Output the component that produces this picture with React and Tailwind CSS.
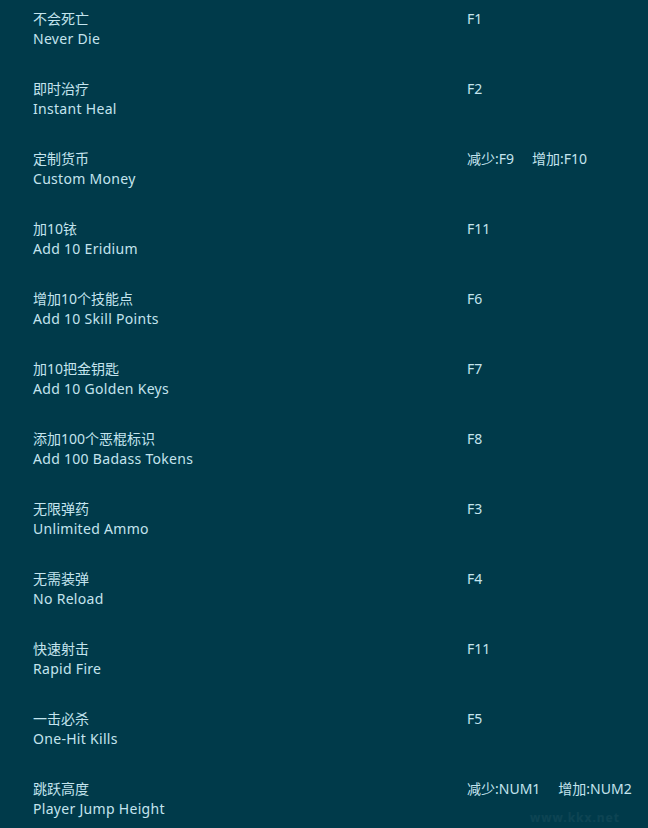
import React from 'react';

const rows = [
  { cn: '不会死亡', en: 'Never Die', keys: ['F1'] },
  { cn: '即时治疗', en: 'Instant Heal', keys: ['F2'] },
  { cn: '定制货币', en: 'Custom Money', keys: ['减少:F9', '增加:F10'] },
  { cn: '加10铱', en: 'Add 10 Eridium', keys: ['F11'] },
  { cn: '增加10个技能点', en: 'Add 10 Skill Points', keys: ['F6'] },
  { cn: '加10把金钥匙', en: 'Add 10 Golden Keys', keys: ['F7'] },
  { cn: '添加100个恶棍标识', en: 'Add 100 Badass Tokens', keys: ['F8'] },
  { cn: '无限弹药', en: 'Unlimited Ammo', keys: ['F3'] },
  { cn: '无需装弹', en: 'No Reload', keys: ['F4'] },
  { cn: '快速射击', en: 'Rapid Fire', keys: ['F11'] },
  { cn: '一击必杀', en: 'One-Hit Kills', keys: ['F5'] },
  { cn: '跳跃高度', en: 'Player Jump Height', keys: ['减少:NUM1', '增加:NUM2'] },
];

const App = () => {
  return (
    <div
      className="relative w-[648px] h-[828px] overflow-hidden bg-[#003a4a] text-[#c4e4ee] text-[14px] leading-[20px] pt-[9px]"
      style={{ fontFamily: '"Noto Sans", "Noto Sans CJK SC", sans-serif' }}
    >
      {rows.map((row, i) => (
        <div key={i} className="flex h-[70px]">
          <div className="w-[467px] pl-[33px] flex flex-col">
            <span>{row.cn}</span>
            <span className="tracking-[0.3px]">{row.en}</span>
          </div>
          <div className="flex gap-[18px]">
            {row.keys.map((k) => (
              <span key={k}>{k}</span>
            ))}
          </div>
        </div>
      ))}

      {/* faint site watermark */}
      <div className="absolute right-[28px] bottom-[2px] text-[12px] leading-[16px] font-bold tracking-[1px] text-white/[0.05]">
        www.kkx.net
      </div>
    </div>
  );
};

export default App;
